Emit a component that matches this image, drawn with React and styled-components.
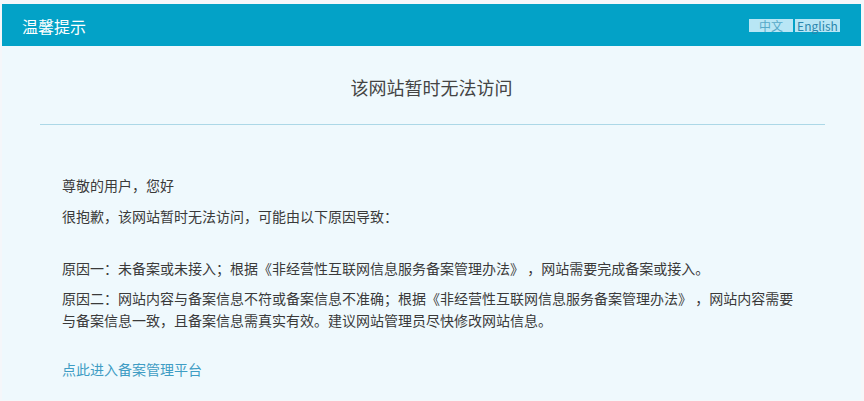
import React from 'react';
import styled, { createGlobalStyle } from 'styled-components';

const GlobalStyle = createGlobalStyle`
  html, body {
    margin: 0;
    padding: 0;
    background: #f5f7fa;
  }

  body {
    font-family: "Noto Sans CJK SC", "Noto Sans", sans-serif;
  }
`;

const StyledPage = styled.div`
  padding: 4px 3px 0 2px;
  min-height: 397px;
  box-sizing: border-box;
  display: flex;
  flex-direction: column;
`;

const StyledHeader = styled.header`
  display: flex;
  align-items: center;
  justify-content: space-between;
  height: 42px;
  padding: 0 21px 0 20px;
  background: #03a2c7;

  h1 {
    margin: 0;
    font-size: 16px;
    font-weight: 400;
    color: #ffffff;
    line-height: 20px;
    padding-top: 1px;
  }
`;

const StyledLangSwitch = styled.ul`
  display: flex;
  gap: 2px;
  margin: 0;
  padding: 0;
  list-style: none;
`;

const LangButton = styled.li`
  width: ${({ $width }) => $width}px;
  height: 13px;
  line-height: 13px;
  font-size: 12px;
  text-align: center;
  background: #b8e6f5;
  color: ${({ $active }) => ($active ? '#56a9c8' : '#2a86ad')};
  cursor: pointer;
`;

const StyledMain = styled.main`
  flex: 1;
  background: #eff9fd;
  padding-bottom: 20px;
`;

const Title = styled.h2`
  margin: 0;
  padding-top: 28px;
  font-size: 18px;
  line-height: 26px;
  font-weight: 400;
  color: #444444;
  text-align: center;
`;

const Divider = styled.hr`
  margin: 24px 36px 0 38px;
  border: 0;
  border-top: 1px solid #acd8e7;
`;

const StyledContent = styled.section`
  padding: 49px 60px 0 60px;
  max-width: 738px;
`;

const Paragraph = styled.p`
  margin: 0 0 ${({ $gap }) => $gap}px;
  font-size: 14px;
  line-height: 22px;
  color: #3a3a3a;
`;

const PlatformLink = styled.a`
  display: block;
  margin-top: 27px;
  font-size: 14px;
  line-height: 22px;
  color: #3f9dc4;
  text-decoration: none;
`;

const reasons = [
  '原因一：未备案或未接入；根据《非经营性互联网信息服务备案管理办法》 ，网站需要完成备案或接入。',
  '原因二：网站内容与备案信息不符或备案信息不准确；根据《非经营性互联网信息服务备案管理办法》 ，网站内容需要与备案信息一致，且备案信息需真实有效。建议网站管理员尽快修改网站信息。',
];

const App = () => (
  <>
    <GlobalStyle />
    <StyledPage>
      <StyledHeader>
        <h1>温馨提示</h1>
        <StyledLangSwitch>
          <LangButton $width={44} $active>
            中文
          </LangButton>
          <LangButton $width={45}>English</LangButton>
        </StyledLangSwitch>
      </StyledHeader>

      <StyledMain>
        <Title>该网站暂时无法访问</Title>
        <Divider />

        <StyledContent>
          <Paragraph $gap={9}>尊敬的用户，您好</Paragraph>
          <Paragraph $gap={30}>很抱歉，该网站暂时无法访问，可能由以下原因导致：</Paragraph>

          {reasons.map((text, i) => (
            <Paragraph key={i} $gap={8}>
              {text}
            </Paragraph>
          ))}

          <PlatformLink href="#">点此进入备案管理平台</PlatformLink>
        </StyledContent>
      </StyledMain>
    </StyledPage>
  </>
);

export default App;
